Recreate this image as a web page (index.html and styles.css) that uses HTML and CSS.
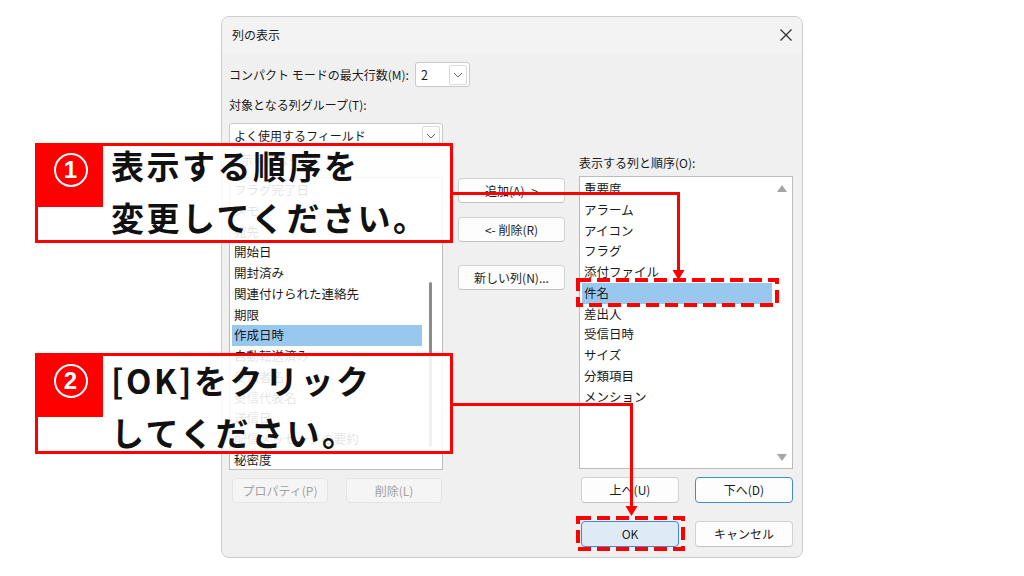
FILE: index.html
```html
<!DOCTYPE html>
<html lang="ja">
<head>
<meta charset="utf-8">
<title>列の表示</title>
<link rel="stylesheet" href="styles.css">
</head>
<body>
<div class="dialog">
  <div class="titlebar">
    <span class="title">列の表示</span>
    <svg class="close" viewBox="0 0 12 12"><path d="M0.5 0.5 L11.5 11.5 M11.5 0.5 L0.5 11.5" stroke="#2b2b2b" stroke-width="1.2" fill="none"/></svg>
  </div>
  <div class="content">
    <div class="row-compact">
      <span class="compact-label">コンパクト モードの最大行数(M):</span>
      <div class="combo combo-small"><span>2</span><span class="drop"><svg viewBox="0 0 10 6" class="chev"><path d="M1 1 L5 5 L9 1" stroke="#666" stroke-width="1" fill="none"/></svg></span></div>
    </div>
    <div class="label group-label">対象となる列グループ(T):</div>
    <div class="columns">
      <div class="col col-left">
        <div class="combo combo-wide"><span>よく使用するフィールド</span><span class="drop"><svg viewBox="0 0 10 6" class="chev"><path d="M1 1 L5 5 L9 1" stroke="#666" stroke-width="1" fill="none"/></svg></span></div>
        <div class="label avail-label">表示可能な列(V):</div>
        <div class="list">
          <div class="items">
            <div class="item">フラグ完了日</div>
            <div class="item">メモ</div>
            <div class="item">宛先</div>
            <div class="item">開始日</div>
            <div class="item">開封済み</div>
            <div class="item">関連付けられた連絡先</div>
            <div class="item">期限</div>
            <div class="item sel">作成日時</div>
            <div class="item">自動転送済み</div>
            <div class="item">受信者名</div>
            <div class="item">受信代表名</div>
            <div class="item">送信日</div>
            <div class="item">配信メッセージの要約</div>
            <div class="item">秘密度</div>
          </div>
          <div class="vscroll vscroll-thin"><div class="thumb"></div></div>
        </div>
        <div class="btnrow btnrow-left">
          <button class="btn btn-dis">プロパティ(P)</button>
          <button class="btn btn-dis">削除(L)</button>
        </div>
      </div>
      <div class="col col-mid">
        <button class="btn btn-mid">追加(A) -&gt;</button>
        <button class="btn btn-mid btn-remove">&lt;- 削除(R)</button>
        <button class="btn btn-mid btn-new">新しい列(N)...</button>
      </div>
      <div class="col col-right">
        <div class="label order-label">表示する列と順序(O):</div>
        <div class="list">
          <div class="items">
            <div class="item">重要度</div>
            <div class="item">アラーム</div>
            <div class="item">アイコン</div>
            <div class="item">フラグ</div>
            <div class="item">添付ファイル</div>
            <div class="item sel">件名</div>
            <div class="item">差出人</div>
            <div class="item">受信日時</div>
            <div class="item">サイズ</div>
            <div class="item">分類項目</div>
            <div class="item">メンション</div>
          </div>
          <div class="vscroll vscroll-arrows"><span class="tri-up"></span><span class="tri-down"></span></div>
        </div>
        <div class="btnrow btnrow-right">
          <button class="btn btn-r">上へ(U)</button>
          <button class="btn btn-r btn-focus">下へ(D)</button>
        </div>
        <div class="btnrow btnrow-right okrow">
          <button class="btn btn-r btn-ok">OK</button>
          <button class="btn btn-r">キャンセル</button>
        </div>
      </div>
    </div>
  </div>
</div>

<div class="callout c1">
  <div class="badge"><span class="num">1</span></div>
  <div class="ctext">表示する順序を<br>変更してください。</div>
</div>
<div class="callout c2">
  <div class="badge"><span class="num">2</span></div>
  <div class="ctext">[OK]をクリック<br>してください。</div>
</div>

<svg class="overlay" viewBox="0 0 1024 576" width="1024" height="576">
  <path d="M452 193.5 H678.5 V272" stroke="#f00" stroke-width="3" fill="none"/>
  <polygon points="672.5,270 684.5,270 678.5,280" fill="#f00"/>
  <path d="M452 404.5 H631.5 V508" stroke="#f00" stroke-width="3" fill="none"/>
  <polygon points="625.5,506 637.5,506 631.5,516" fill="#f00"/>
  <rect x="578" y="280" width="199" height="25" stroke="#f00" stroke-width="4" fill="none" stroke-dasharray="13 6"/>
  <rect x="578" y="518" width="105" height="31" stroke="#f00" stroke-width="4" fill="none" stroke-dasharray="13 6"/>
</svg>
</body>
</html>
```

FILE: styles.css
```css
* { box-sizing: border-box; }
html, body { margin: 0; padding: 0; }
body {
  width: 1024px;
  height: 576px;
  background: #ffffff;
  font-family: "Noto Sans CJK JP", "Noto Sans", sans-serif;
  color: #1b1b1b;
  font-size: 12px;
  position: relative;
  overflow: hidden;
}

.dialog {
  margin: 16px 0 0 221px;
  width: 582px;
  height: 542px;
  border: 1px solid #cdcdcd;
  border-radius: 8px;
  background: #f0f0f0;
}
.titlebar {
  height: 36px;
  display: flex;
  align-items: center;
  justify-content: space-between;
  padding: 0 10px;
  background: #f3f3f3;
  border-radius: 8px 8px 0 0;
}
.title { font-size: 12px; line-height: 16px; }
.close { width: 12px; height: 12px; margin-top: -1px; }

.content { padding: 9px 9px 0 7px; }
.row-compact { display: flex; align-items: center; height: 25px; }
.compact-label { width: 186px; line-height: 16px; white-space: nowrap; }

.combo {
  display: flex;
  align-items: center;
  justify-content: space-between;
  height: 25px;
  background: #fff;
  border: 1px solid #c9c9c9;
  border-radius: 3px;
  padding-left: 4px;
  font-size: 12px;
}
.combo-small { width: 55px; padding-left: 5px; font-size: 12.5px; }
.combo-wide { width: 214px; }
.drop {
  width: 18px;
  height: 20px;
  margin-right: 2px;
  border: 1px solid #dadada;
  border-radius: 2px;
  display: flex;
  align-items: center;
  justify-content: center;
  background: #fff;
}
.chev { width: 10px; height: 6px; }

.label { line-height: 16px; height: 16px; white-space: nowrap; }
.group-label { margin-top: 10px; }
.columns { display: flex; margin-top: 10px; }
.col { display: flex; flex-direction: column; }
.col-left { width: 214px; }
.col-mid { width: 107px; margin-left: 15px; padding-top: 55px; }
.col-right { width: 214px; margin-left: 14px; }

.avail-label { margin-top: 4px; }
.order-label { margin-top: 32px; }

.list {
  height: 293px;
  border: 1px solid #bcbcbc;
  background: #fff;
  display: flex;
  margin-top: 9px;
}
.col-right .list { margin-top: 5px; }
.items { flex: 1; padding-top: 2px; margin-left: 2px; }
.item {
  height: 20.75px;
  line-height: 20.75px;
  padding-left: 2px;
  font-size: 12.5px;
  white-space: nowrap;
  color: #1a1a1a;
}
.item.sel { background: #99c8ee; }

.vscroll { width: 20px; }
.vscroll-thin {
  display: flex;
  flex-direction: column;
  align-items: flex-start;
  padding: 104px 0 0 7px;
}
.thumb { width: 3px; height: 165px; background: #8c8c8c; border-radius: 2px; }
.vscroll-arrows {
  display: flex;
  flex-direction: column;
  justify-content: space-between;
  align-items: center;
  padding: 8px 0 7px;
}
.tri-up, .tri-down { width: 0; height: 0; border-left: 5px solid transparent; border-right: 5px solid transparent; }
.tri-up { border-bottom: 7px solid #a6a6a6; }
.tri-down { border-top: 7px solid #a6a6a6; }

.btn {
  font-family: "Noto Sans CJK JP", "Noto Sans", sans-serif;
  font-size: 12px;
  color: #1b1b1b;
  background: #fdfdfd;
  border: 1px solid #d2d2d2;
  border-bottom-color: #c2c2c2;
  border-radius: 4px;
  padding: 0;
  height: 25px;
  line-height: 20px;
  white-space: nowrap;
}
.btnrow { display: flex; margin-top: 8px; }
.btnrow-left { padding-left: 3px; gap: 18px; }
.btnrow-left .btn { width: 96px; }
.btn-dis { background: #f5f5f5; border-color: #e4e4e4; color: #a2a2a2; }
.btn-mid { width: 107px; }
.btn-remove { margin-top: 14px; }
.btn-new { margin-top: 23px; }
.btnrow-right { padding-left: 2px; gap: 16px; }
.btn-r { width: 98px; height: 26px; }
.btn-focus { border: 1px solid #3f8bd6; }
.btn-ok { background: #dfeaf7; border: 1px solid #3f8bd6; }
.okrow { margin-top: 18px; }

.callout {
  position: absolute;
  left: 35px;
  width: 418px;
  height: 100px;
  border: 3px solid #ff0000;
  background: rgba(255, 255, 255, 0.88);
  display: flex;
  align-items: flex-start;
}
.c1 { top: 143px; }
.c2 { top: 353px; height: 101px; }
.badge {
  width: 65px;
  height: 61px;
  background: #ff0000;
  display: flex;
  justify-content: center;
  align-items: flex-start;
  padding-top: 7px;
  flex-shrink: 0;
}
.c2 .badge { padding-top: 8px; }
.num {
  width: 34px;
  height: 34px;
  border: 2px solid #fff;
  border-radius: 50%;
  color: #fff;
  font-family: "Liberation Sans", "Noto Sans", sans-serif;
  font-weight: 700;
  font-size: 24px;
  line-height: 30px;
  text-align: center;
}
.ctext {
  margin-left: 8px;
  font-size: 33px;
  font-weight: 700;
  line-height: 52px;
  letter-spacing: 2.5px;
  color: #111;
  white-space: nowrap;
}
.c1 .ctext { margin-top: -7px; }
.c2 .ctext { margin-top: -2px; }

.overlay {
  position: absolute;
  left: 0;
  top: 0;
  pointer-events: none;
}
```
